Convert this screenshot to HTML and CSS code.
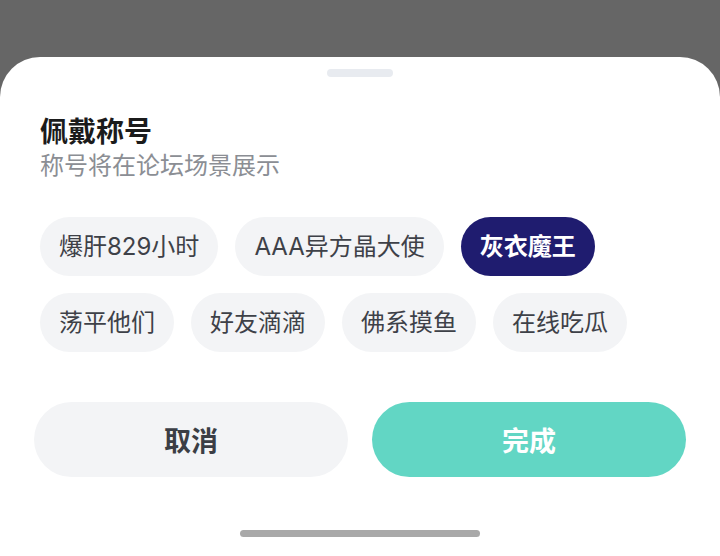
FILE: index.html
```html
<!DOCTYPE html>
<html lang="zh-CN">
<head>
    <meta charset="UTF-8">
    <meta name="viewport" content="width=device-width, initial-scale=1.0">
    <title>佩戴称号</title>
    <link rel="stylesheet" href="styles.css">
</head>
<body>
    <div class="sheet">
        <div class="handle"></div>
        <div class="head">
            <div class="title">佩戴称号</div>
            <div class="sub">称号将在论坛场景展示</div>
        </div>
        <div class="chips">
            <div class="chip">爆肝829小时</div>
            <div class="chip">AAA异方晶大使</div>
            <div class="chip on">灰衣魔王</div>
            <div class="chip">荡平他们</div>
            <div class="chip">好友滴滴</div>
            <div class="chip">佛系摸鱼</div>
            <div class="chip">在线吃瓜</div>
        </div>
        <div class="btns">
            <div class="btn cancel">取消</div>
            <div class="btn done">完成</div>
        </div>
        <div class="home"></div>
    </div>
</body>
</html>
```

FILE: styles.css
```css
body{
    margin:0;
    height:556px;
    background:#666666;
    font-family:"Noto Sans CJK SC","Noto Sans",sans-serif;
    overflow:hidden;
}
.sheet{
    margin-top:57px;
    height:499px;
    background:#fff;
    border-radius:40px 40px 0 0;
    display:flex;
    flex-direction:column;
}
.handle{
    width:66px;
    height:8px;
    border-radius:4px;
    background:#e8ebf0;
    margin:12px auto 0;
}
.head{
    padding:36px 40px 0;
}
.title{
    font-size:28px;
    line-height:34px;
    font-weight:bold;
    color:#1b1b1b;
}
.sub{
    font-size:24px;
    line-height:34px;
    color:#8b8e94;
}
.chips{
    display:flex;
    flex-wrap:wrap;
    gap:17px;
    padding:36px 40px 0;
}
.chip{
    height:59px;
    line-height:59px;
    padding:0 19px;
    border-radius:30px;
    background:#f3f4f6;
    color:#3e4148;
    font-size:24px;
    font-family:Inter,"Noto Sans CJK SC",sans-serif;
}
.chip.on{
    background:#1f1c6f;
    color:#fff;
    font-weight:bold;
}
.btns{
    display:flex;
    gap:24px;
    padding:50px 34px 0;
}
.btn{
    flex:1;
    height:75px;
    line-height:75px;
    border-radius:38px;
    text-align:center;
    font-size:27px;
    font-weight:bold;
}
.cancel{
    background:#f3f4f6;
    color:#3b3e45;
}
.done{
    background:#62d6c4;
    color:#fff;
}
.home{
    width:240px;
    height:7px;
    border-radius:4px;
    background:#a9a9a9;
    margin:53px auto 0;
}
```
